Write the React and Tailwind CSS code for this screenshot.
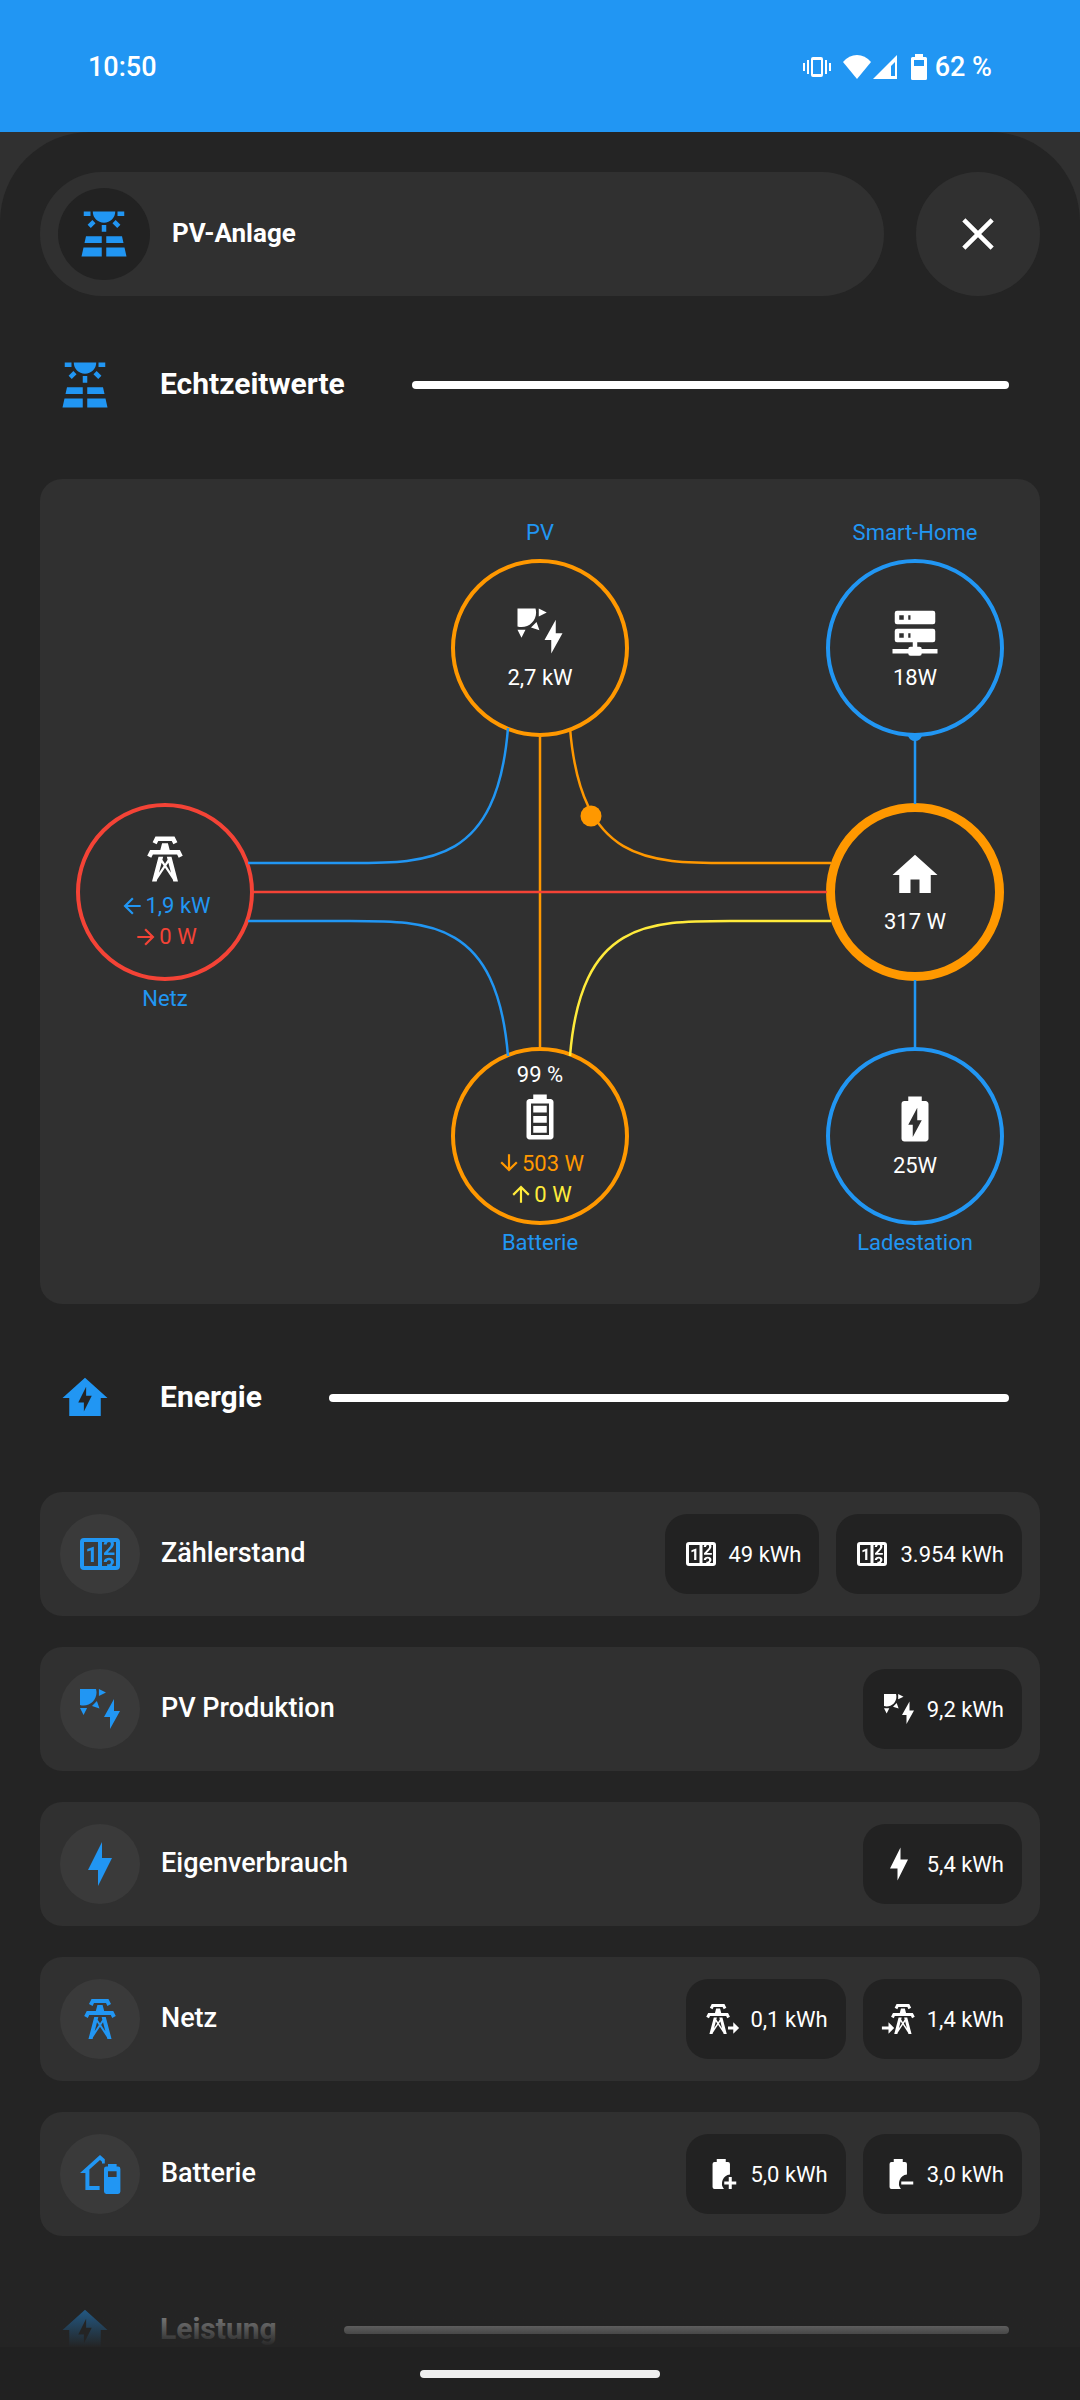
import React from "react";
import clsx from "clsx";

// 24x24 icon outlines
const ICONS = {
  solarPanel: "M3.33 16H11V13H4L3.33 16M13 16H20.67L20 13H13V16M21.11 18H13V22H22L21.11 18M2 22H11V18H2.89L2 22M11 8H13V11H11V8M15.76 7.21L17.18 5.79L19.3 7.91L17.89 9.33L15.76 7.21M4.71 7.91L6.83 5.79L8.24 7.21L6.12 9.33L4.71 7.91M3 2H6V4H3V2M18 2H21V4H18V2M12 7C14.76 7 17 4.76 17 2H7C7 4.76 9.24 7 12 7Z",
  solarPower: "M11.45,2V5.55L15,3.77L11.45,2M10.45,8L8,10.46L11.75,11.71L10.45,8M2,11.45L3.77,15L5.55,11.45H2M10,2H2V10C2.57,10.17 3.17,10.25 3.77,10.25C7.35,10.26 10.26,7.35 10.27,3.75C10.26,3.16 10.17,2.57 10,2M17,22V16H14L19,7V13H22L17,22Z",
  homeBolt: "M12 3L2 12H5V20H19V12H22L12 3M11.5 18V14H9L12.5 7V11H15L11.5 18Z",
  bolt: "M11 15H6L13 1V9H18L11 23V15Z",
  server: "M13,19H14A1,1 0 0,1 15,20H22V22H15A1,1 0 0,1 14,23H10A1,1 0 0,1 9,22H2V20H9A1,1 0 0,1 10,19H11V17H4A1,1 0 0,1 3,16V12A1,1 0 0,1 4,11H20A1,1 0 0,1 21,12V16A1,1 0 0,1 20,17H13V19M4,3H20A1,1 0 0,1 21,4V8A1,1 0 0,1 20,9H4A1,1 0 0,1 3,8V4A1,1 0 0,1 4,3M9,7H10V5H9V7M9,15H10V13H9V15M5,5V7H7V5H5M5,13V15H7V13H5Z",
  home: "M10,20V14H14V20H19V12H22L12,3L2,12H5V20H10Z",
  battery: "M16 20H8V6H16M16.67 4H15V2H9V4H7.33C6.6 4 6 4.6 6 5.33V20.67C6 21.4 6.6 22 7.33 22H16.67C17.41 22 18 21.41 18 20.67V5.33C18 4.6 17.4 4 16.67 4M15 16H9V19H15V16M15 7H9V10H15V7M15 11.5H9V14.5H15V11.5Z",
  batteryCharging: "M16.67,4H15V2H9V4H7.33A1.33,1.33 0 0,0 6,5.33V20.66C6,21.4 6.6,22 7.33,22H16.66C17.4,22 18,21.4 18,20.67V5.33C18,4.6 17.4,4 16.67,4M11,20V14.5H9L13,7V12.5H15",
  batteryPlus: "M16,4H14.5V2H8.5V4H7A1.3,1.3 0 0,0 5.7,5.3V20.7A1.3,1.3 0 0,0 7,22H13.3A6,6 0 0,1 17.3,12.3V5.3A1.3,1.3 0 0,0 16,4M16.5,14V17H13.5V19H16.5V22H18.5V19H21.5V17H18.5V14Z",
  batteryMinus: "M16,4H14.5V2H8.5V4H7A1.3,1.3 0 0,0 5.7,5.3V20.7A1.3,1.3 0 0,0 7,22H13.3A6,6 0 0,1 17.3,12.3V5.3A1.3,1.3 0 0,0 16,4M13.5,17V19H21.5V17Z",
  homeBattery: "M12,2.5L2,11.5H4.7V20H11.8V18H6.7V9.7L12,5L13,5.9V6.8H14.4V4.6L12,2.5M20.7,8.3H20.3V7H16V8.3H15.2A1.2,1.2 0 0,0 14,9.5V20.8A1.2,1.2 0 0,0 15.2,22H21A1.2,1.2 0 0,0 22.2,20.8V9.5A1.2,1.2 0 0,0 21,8.3M20.3,13.5H16V10.6H20.3Z",
  tower: "M8.28,5.45L6.5,4.55L7.76,2H16.23L17.5,4.55L15.72,5.44L15,4H9L8.28,5.45M18.62,8H14.09L13.3,5H10.7L9.91,8H5.38L4.1,10.55L5.89,11.44L6.62,10H17.38L18.1,11.45L19.89,10.56L18.62,8M17.77,22H15.7L15.46,21.1L12,15.9L8.53,21.1L8.3,22H6.23L9.12,11H11.19L10.83,12.35L12,14.1L13.16,12.35L12.81,11H14.88L17.77,22M11.4,15L10.5,13.65L9.32,18.13L11.4,15M14.68,18.12L13.5,13.64L12.6,15L14.68,18.12Z",
  counter: "M4,4H20A2,2 0 0,1 22,6V18A2,2 0 0,1 20,20H4A2,2 0 0,1 2,18V6A2,2 0 0,1 4,4M4,6V18H11V6H4M20,18V6H18.76C19,6.54 18.95,7.07 18.95,7.13C18.88,7.8 18.41,8.5 18.24,8.75L15.91,11.3L19.23,11.28L19.24,12.5L14.04,12.47L14,11.47C14,11.47 17.05,8.24 17.2,7.95C17.34,7.67 17.91,6 16.5,6C15.27,6.05 15.41,7.3 15.41,7.3L13.87,7.31C13.87,7.31 13.88,6.65 14.25,6H13V18H15.58L15.57,17.14L16.54,17.13C16.54,17.13 17.45,16.97 17.46,16.08C17.5,15.08 16.65,15.08 16.5,15.08C16.37,15.08 15.43,15.13 15.43,15.95H13.91C13.91,15.95 13.95,13.89 16.5,13.89C19.1,13.89 18.96,15.91 18.96,15.91C18.96,15.91 19,17.16 17.85,17.63L18.37,18H20M8.92,16H7.42V10.2L5.62,10.76V9.53L8.76,8.41H8.92V16Z",
  arrowLeft: "M20,11V13H8L13.5,18.5L12.08,19.92L4.16,12L12.08,4.08L13.5,5.5L8,11H20Z",
  arrowRight: "M4,11V13H16L10.5,18.5L11.92,19.92L19.84,12L11.92,4.08L10.5,5.5L16,11H4Z",
  arrowDown: "M11,4H13V16L18.5,10.5L19.92,11.92L12,19.84L4.08,11.92L5.5,10.5L11,16V4Z",
  arrowUp: "M13,20H11V8L5.5,13.5L4.08,12.08L12,4.16L19.92,12.08L18.5,13.5L13,8V20Z",
  close: "M19,6.41L17.59,5L12,10.59L6.41,5L5,6.41L10.59,12L5,17.59L6.41,19L12,13.41L17.59,19L19,17.59L13.41,12L19,6.41Z",
};

function Icon({ name, className }) {
  return (
    <svg viewBox="0 0 24 24" fill="currentColor" aria-hidden="true" className={clsx("shrink-0", className)}>
      {name === "towerExport" && (
        <>
          <path d={ICONS.tower} transform="translate(-2.6)" />
          <path d="M16,17H19.5V14.2L23.4,18L19.5,21.8V19H16Z" />
        </>
      )}
      {name === "towerImport" && (
        <>
          <path d={ICONS.tower} transform="translate(2.6)" />
          <path d="M0.6,17H5V14.2L8.8,18L5,21.8V19H0.6Z" />
        </>
      )}
      {ICONS[name] && <path d={ICONS[name]} />}
    </svg>
  );
}

function StatusBar() {
  return (
    <div className="flex h-[132px] shrink-0 items-center justify-between bg-[#2196f3] px-[88px] pt-[2px] text-[27px] font-medium">
      <span>10:50</span>
      <div className="flex items-center">
        <svg viewBox="0 0 28 22" fill="currentColor" className="h-[22px] w-[28px]" aria-hidden="true">
          <path fillRule="evenodd" d="M10,1H18A2,2 0 0 1 20,3V19A2,2 0 0 1 18,21H10A2,2 0 0 1 8,19V3A2,2 0 0 1 10,1M10,4V18H18V4Z" />
          <path d="M4,4H6V18H4ZM0,7H2V15H0ZM22,4H24V18H22ZM26,7H28V15H26Z" />
        </svg>
        <svg viewBox="0 0 28 24" fill="currentColor" className="ml-[12px] h-[24px] w-[28px]" aria-hidden="true">
          <path d="M14,24L0,7Q6,0 14,0T28,7Z" />
        </svg>
        <svg viewBox="0 0 24 24" fill="currentColor" className="ml-[2px] h-[24px] w-[24px]" aria-hidden="true">
          <path fillRule="evenodd" d="M24,0V24H0ZM22,7L18,11V21H22Z" />
        </svg>
        <svg viewBox="0 0 16 26" fill="currentColor" className="ml-[14px] h-[26px] w-[16px]" aria-hidden="true">
          <path fillRule="evenodd" d="M4,0H12V3H14.5A1.5,1.5 0 0 1 16,4.5V24.5A1.5,1.5 0 0 1 14.5,26H1.5A1.5,1.5 0 0 1 0,24.5V4.5A1.5,1.5 0 0 1 1.5,3H4ZM3,6V12H13V6Z" />
        </svg>
        <span className="ml-2">62 %</span>
      </div>
    </div>
  );
}

function SectionHeader({ icon, title, className = "mt-[62px]" }) {
  return (
    <div className={clsx("mb-[62px] flex h-16 items-center pl-[18px] pr-[31px]", className)}>
      <Icon name={icon} className="size-[54px] text-[#2196f3]" />
      <h2 className="ml-[48px] pb-[2px] text-[30px] font-bold leading-8">{title}</h2>
      <div className="ml-[67px] h-2 flex-1 rounded-full bg-white" />
    </div>
  );
}

function Flow({ icon, value, className }) {
  return (
    <span className={clsx("flex items-center", className)}>
      <Icon name={icon} className="size-[26px]" />
      {value}
    </span>
  );
}

function Node({ place, ring, label, labelOnTop, children }) {
  return (
    <div className={clsx("absolute size-[178px] -translate-x-1/2 -translate-y-1/2", place)}>
      <div className={clsx("flex size-full flex-col items-center justify-center rounded-full", ring)}>{children}</div>
      {label && (
        <span
          className={clsx(
            "absolute left-1/2 -translate-x-1/2 whitespace-nowrap text-[#2196f3]",
            labelOnTop ? "bottom-full mb-[11px]" : "top-full mt-[2px]"
          )}
        >
          {label}
        </span>
      )}
    </div>
  );
}

function EnergyFlow() {
  return (
    <div className="relative h-[825px] rounded-[22px] bg-[#303030] text-[22px] leading-[31px]">
      <Node place="left-[50%] top-[169px]" ring="border-4 border-[#ff9800]" label="PV" labelOnTop>
        <Icon name="solarPower" className="mb-1 size-[54px]" />
        2,7 kW
      </Node>
      <Node place="left-[87.5%] top-[169px]" ring="border-4 border-[#2196f3]" label="Smart-Home" labelOnTop>
        <Icon name="server" className="mb-1 size-[54px]" />
        18W
      </Node>
      <Node place="left-[12.5%] top-[413px]" ring="border-4 border-[#f44336]" label="Netz">
        <Icon name="tower" className="mb-1 size-[54px]" />
        <Flow icon="arrowLeft" value="1,9 kW" className="text-[#2196f3]" />
        <Flow icon="arrowRight" value="0 W" className="text-[#f44336]" />
      </Node>
      <Node place="left-[87.5%] top-[413px]" ring="border-[9px] border-[#ff9800]">
        <Icon name="home" className="mb-1 size-[54px]" />
        317 W
      </Node>
      <Node place="left-[50%] top-[657px]" ring="border-4 border-[#ff9800] pb-1" label="Batterie">
        99 %
        <Icon name="battery" className="mb-1 size-[54px]" />
        <Flow icon="arrowDown" value="503 W" className="text-[#ff9800]" />
        <Flow icon="arrowUp" value="0 W" className="text-[#ffeb3b]" />
      </Node>
      <Node place="left-[87.5%] top-[657px]" ring="border-4 border-[#2196f3]" label="Ladestation">
        <Icon name="batteryCharging" className="mb-1 size-[54px]" />
        25W
      </Node>

      <svg viewBox="0 0 1000 825" preserveAspectRatio="none" fill="none" strokeWidth="2.5" className="absolute inset-0 size-full" aria-hidden="true">
        <g stroke="#2196f3">
          <path d="M468,249C457,384 390,384 310,384H208" />
          <path d="M468,577C457,442 390,442 310,442H208" />
          <path d="M875,257V325M875,501V569" />
        </g>
        <path stroke="#ff9800" d="M500,257V569M530,249C541,384 608,384 690,384H791" />
        <path stroke="#f44336" d="M213,413H787" />
        <path stroke="#ffeb3b" d="M530,577C541,442 608,442 690,442H791" />
        <circle cx="551" cy="337" r="10.5" fill="#ff9800" />
        <path fill="#2196f3" d="M868,257H882Q880,262 875,262T868,257Z" />
      </svg>
    </div>
  );
}

const ROWS = [
  { icon: "counter", title: "Zählerstand", chips: [["counter", "49 kWh"], ["counter", "3.954 kWh"]] },
  { icon: "solarPower", title: "PV Produktion", chips: [["solarPower", "9,2 kWh"]] },
  { icon: "bolt", title: "Eigenverbrauch", chips: [["bolt", "5,4 kWh"]] },
  { icon: "tower", title: "Netz", chips: [["towerExport", "0,1 kWh"], ["towerImport", "1,4 kWh"]] },
  { icon: "homeBattery", title: "Batterie", chips: [["batteryPlus", "5,0 kWh"], ["batteryMinus", "3,0 kWh"]] },
];

function EnergyRow({ icon, title, chips }) {
  return (
    <li className="flex h-[124px] items-center rounded-[22px] bg-[#303030] pl-5 pr-[18px]">
      <span className="flex size-20 shrink-0 items-center justify-center rounded-full bg-[#3a3a3a] text-[#2196f3]">
        <Icon name={icon} className="size-12" />
      </span>
      <span className="ml-[21px] pb-[2px] text-[27px] font-medium leading-8">{title}</span>
      <div className="ml-auto flex gap-[17px]">
        {chips.map(([chipIcon, value]) => (
          <span key={value} className="flex h-20 items-center gap-[10px] rounded-[22px] bg-[#222222] px-[18px] text-[22px]">
            <Icon name={chipIcon} className="size-9" />
            {value}
          </span>
        ))}
      </div>
    </li>
  );
}

export default function App() {
  return (
    <div className="flex h-screen flex-col bg-[#303030] font-['Roboto',sans-serif] text-white">
      <StatusBar />
      <div className="relative min-h-0 flex-1 overflow-hidden rounded-t-[90px] bg-[#242424]">
        <main className="px-10 pt-10">
          <header className="flex gap-8">
            <div className="flex h-[124px] flex-1 items-center rounded-full bg-[#303030] pl-[18px]">
              <span className="flex size-[92px] items-center justify-center rounded-full bg-[#222222] text-[#2196f3]">
                <Icon name="solarPanel" className="size-[54px]" />
              </span>
              <h1 className="ml-[22px] pb-[2px] text-[26px] font-bold leading-8">PV-Anlage</h1>
            </div>
            <button type="button" aria-label="Schließen" className="flex size-[124px] items-center justify-center rounded-full bg-[#303030]">
              <Icon name="close" className="size-[54px]" />
            </button>
          </header>

          <SectionHeader icon="solarPanel" title="Echtzeitwerte" className="mt-[57px]" />
          <EnergyFlow />

          <SectionHeader icon="homeBolt" title="Energie" />
          <ul className="flex flex-col gap-[31px]">
            {ROWS.map((row) => (
              <EnergyRow key={row.title} {...row} />
            ))}
          </ul>

          <SectionHeader icon="homeBolt" title="Leistung" />
        </main>
        <div className="absolute inset-x-0 bottom-0 h-20 bg-linear-to-b from-[#242424]/0 to-[#242424]" />
      </div>
      <div className="flex h-[53px] shrink-0 items-start justify-center bg-[#212121] pt-[23px]">
        <div className="h-2 w-60 rounded-full bg-[#eeeeee]" />
      </div>
    </div>
  );
}
